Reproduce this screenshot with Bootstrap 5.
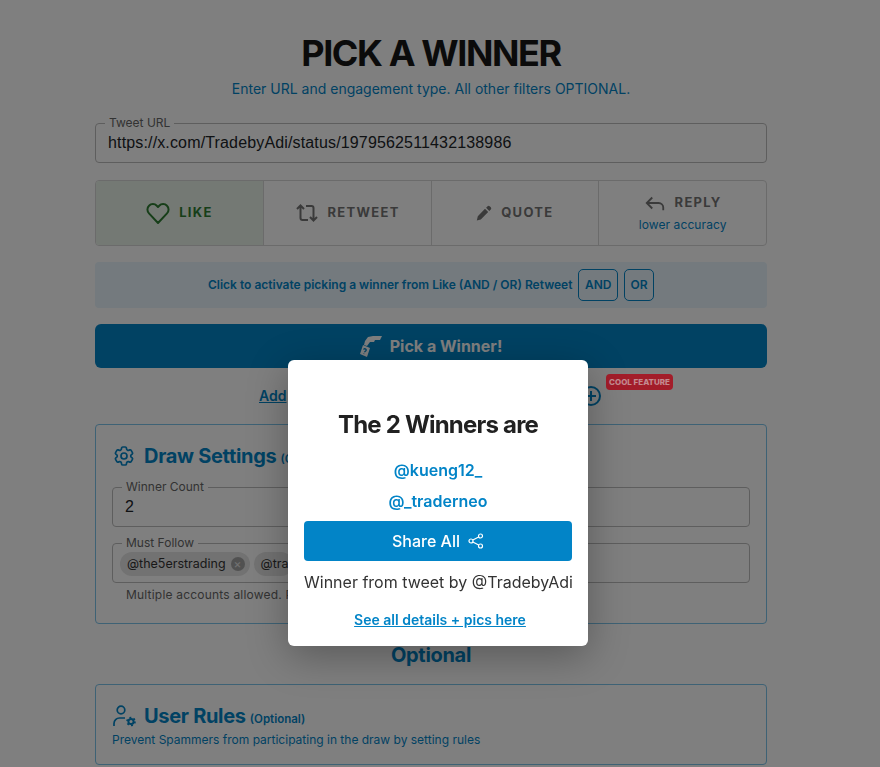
<!DOCTYPE html>
<html lang="en">
<head>
  <meta charset="UTF-8">
  <meta name="viewport" content="width=device-width, initial-scale=1.0">
  <title>Pick a Winner</title>
  <link href="https://cdn.jsdelivr.net/npm/bootstrap@5.3.0/dist/css/bootstrap.min.css" rel="stylesheet">
  <style>
    html, body { height: 100%; overflow: hidden; }
    body { font-family: "Inter", sans-serif; background: #fff; color: #212529; }
    .page-wrap { width: 672px; margin-left: 95px; padding-top: 30px; }
    .page-title { font-size: 36px; line-height: 46px; font-weight: 700; letter-spacing: -1.4px; color: #171717; margin: 0; text-align: center; }
    .page-sub { font-size: 14px; line-height: 20px; color: #0284c7; text-align: center; margin: 3px 0 0; }

    .out-field { border: 1px solid #bdbdbd; border-radius: 4px; padding: 0 12px; height: 46px; margin: 0; min-width: 0; }
    .out-field legend { float: none; width: auto; font-size: 12px; line-height: 12px; color: #666; padding: 0 4px; margin: 0 0 0 -3px; }
    .out-value { font-family: "Liberation Sans", Arial, sans-serif; font-size: 16px; line-height: 22px; letter-spacing: .15px; color: #212529; padding-top: 3px; }
    .url-field { margin-top: 18px; }
    .field-gap { margin-top: 10px; }

    .type-row { border: 1px solid #d6d6d6; border-radius: 4px; height: 66px; margin-top: 17px; overflow: hidden; }
    .type-cell { flex: 1 1 0; border-left: 1px solid #d6d6d6; font-size: 13px; font-weight: 700; letter-spacing: 1.3px; color: #757575; }
    .type-cell:first-child { border-left: 0; background: #e9f3e9; color: #2e7d32; }
    .type-cell small { display: block; font-size: 12px; font-weight: 400; letter-spacing: .1px; color: #0284c7; margin-top: 2px; }
    .type-line { gap: 9px; }

    .and-strip { height: 46px; margin-top: 16px; background: #e8f4fd; border-radius: 4px; font-size: 12px; font-weight: 600; color: #0284c7; gap: 6px; }
    .and-btn { border: 1px solid #0284c7; border-radius: 5px; height: 32px; padding: 0 5.5px; color: #0284c7; font-size: 12px; font-weight: 600; }

    .pick-btn { height: 44px; margin-top: 16px; background: #0284c7; border-radius: 6px; color: #fff; font-size: 16px; font-weight: 700; gap: 8px; }
    .add-row { height: 27px; margin-top: 14px; padding-left: 164px; position: relative; }
    .add-link { font-size: 14px; font-weight: 600; color: #0284c7; text-decoration: underline; width: 322px; }
    .cool-tag { position: absolute; left: 511px; top: -8px; z-index: 1055; background: #a31d2a; color: #c48a90; font-size: 8px; line-height: 16px; font-weight: 800; padding: 0 3px; border-radius: 4px; }

    .rule-panel { border: 1px solid #7cc4ea; border-radius: 4px; padding: 16px; margin-top: 15px; }
    .panel-head { font-size: 20px; line-height: 30px; font-weight: 700; color: #0284c7; letter-spacing: -.3px; gap: 8px; }
    .panel-head small { font-size: 11.5px; line-height: 16px; font-weight: 600; letter-spacing: 0; margin: 5px 0 0 -4px; }
    .chip-row { margin: 3px 0 0 -5px; }
    .chip-item { background: #e4e4e4; border-radius: 12px; height: 24px; font-size: 12.5px; padding: 0 5px 0 7px; gap: 5px; color: #333; white-space: nowrap; }
    .chip-x { width: 14px; height: 14px; border-radius: 50%; background: #a3a3a3; color: #e4e4e4; font-size: 12px; line-height: 13px; text-align: center; }
    .hint-line { font-size: 12px; line-height: 18px; color: #666; margin: 3px 0 3px 14px; letter-spacing: .2px; }
    .optional-head { font-size: 20px; line-height: 28px; font-weight: 700; color: #0284c7; text-align: center; margin: 17px 0 0; letter-spacing: -.3px; }
    .panel-note { font-size: 12px; line-height: 16px; color: #0284c7; margin: 1px 0 0; }

    .winner-box { position: absolute; left: 288px; top: 360px; width: 300px; height: 286px; padding: 47px 16px 0; background: #fff; border: 0; border-radius: 6px; text-align: center; z-index: 1060; box-shadow: 0 10px 40px rgba(0,0,0,.3); }
    .winner-title { font-size: 24px; line-height: 36px; font-weight: 700; color: #212121; letter-spacing: -.8px; margin: 0 0 12px; }
    .winner-name { font-size: 16px; line-height: 31px; font-weight: 600; color: #0284c7; }
    .share-btn { height: 40px; margin-top: 4px; background: #0284c7; color: #fff; border-radius: 4px; font-size: 16px; font-weight: 500; gap: 8px; }
    .winner-from { font-size: 16px; line-height: 24px; color: #333; margin-top: 9px; white-space: nowrap; }
    .winner-link { display: block; font-size: 14px; font-weight: 600; color: #0284c7; margin-top: 15px; padding-left: 4px; }
  </style>
</head>
<body>
  <div class="page-wrap">
    <h1 class="page-title">PICK A WINNER</h1>
    <p class="page-sub">Enter URL and engagement type. All other filters OPTIONAL.</p>

    <fieldset class="out-field url-field">
      <legend>Tweet URL</legend>
      <div class="out-value">https://x.com/TradebyAdi/status/1979562511432138986</div>
    </fieldset>

    <div class="type-row d-flex">
      <div class="type-cell d-flex align-items-center justify-content-center type-line">
        <svg width="24" height="24" viewBox="0 0 24 24" fill="none" stroke="currentColor" stroke-width="2" stroke-linejoin="round"><path d="M12 22 3 12.400a5.400 5.400 0 0 1 0-7.600 5.300 5.300 0 0 1 7.800 0l1.200 1.200 1.200-1.200a5.300 5.300 0 0 1 7.800 0 5.400 5.400 0 0 1 0 7.600z"/></svg>
        LIKE
      </div>
      <div class="type-cell d-flex align-items-center justify-content-center type-line">
        <svg width="24" height="24" viewBox="0 0 24 24" fill="none" stroke="currentColor" stroke-width="2"><path d="M2 8l3.500-3.500L9 8M5.500 5v12a2 2 0 0 0 2 2H13M22 16l-3.500 3.500L15 16M18.500 19V7a2 2 0 0 0-2-2H11"/></svg>
        RETWEET
      </div>
      <div class="type-cell d-flex align-items-center justify-content-center type-line">
        <svg width="16" height="16" viewBox="0 0 16 16" fill="currentColor"><path d="M11.600 1.200a1.500 1.500 0 0 1 2.100 0l1.100 1.100a1.500 1.500 0 0 1 0 2.100l-1.500 1.500-3.200-3.200zM9 3.800 12.200 7l-7.400 7.400-4 1.100 1-4.200z"/></svg>
        QUOTE
      </div>
      <div class="type-cell d-flex flex-column align-items-center justify-content-center">
        <div class="d-flex align-items-center type-line">
          <svg width="22" height="22" viewBox="0 0 24 24" fill="none" stroke="currentColor" stroke-width="2"><path d="M9 6 3 12l6 6M3 12h13a5 5 0 0 1 5 5v3"/></svg>
          REPLY
        </div>
        <small>lower accuracy</small>
      </div>
    </div>

    <div class="and-strip d-flex align-items-center justify-content-center">
      <span>Click to activate picking a winner from Like (AND / OR) Retweet</span>
      <span class="and-btn d-flex align-items-center">AND</span>
      <span class="and-btn d-flex align-items-center">OR</span>
    </div>

    <div class="pick-btn d-flex align-items-center justify-content-center">
      <svg width="22" height="24" viewBox="0 0 22 24"><path fill="#fff" d="M22 2 13 2 8 3 5 7 4 11 7 12 10 8 14 8 15 6 20 6z"/><path fill="#fff" d="M3 11l7 3-3 9-7-3z"/><path fill="none" stroke="#0284c7" stroke-width="1.300" d="M3.500 15.500c.5-1.500 3.200-.6 2.600 1-.3.8-1.300.9-1.600 1.800M3.800 20l.2-.5"/></svg>
      Pick a Winner!
    </div>

    <div class="add-row d-flex align-items-center">
      <span class="add-link">Add</span>
      <svg width="20" height="20" viewBox="0 0 20 20" fill="none" stroke="#0284c7" stroke-width="2"><circle cx="10" cy="10" r="9"/><path d="M10 5v10M5 10h10"/></svg>
      <span class="cool-tag">COOL FEATURE</span>
    </div>

    <div class="rule-panel">
      <div class="panel-head d-flex align-items-center">
        <svg width="24" height="24" viewBox="0 0 24 24" fill="none" stroke="currentColor" stroke-width="1.700" stroke-linejoin="round"><path d="M9.594 3.940c.09-.542.56-.94 1.110-.94h2.593c.55 0 1.020.398 1.110.94l.213 1.281c.063.374.313.686.645.87.074.04.147.083.22.127.324.196.72.257 1.075.124l1.217-.456a1.125 1.125 0 011.370.49l1.296 2.247a1.125 1.125 0 01-.26 1.431l-1.003.827c-.293.24-.438.613-.431.992a6.759 6.759 0 010 .255c-.007.378.138.75.43.99l1.005.828c.424.35.534.954.26 1.430l-1.298 2.247a1.125 1.125 0 01-1.369.491l-1.217-.456c-.355-.133-.75-.072-1.076.124a6.570 6.570 0 01-.22.128c-.331.183-.581.495-.644.869l-.213 1.280c-.09.543-.56.941-1.110.941h-2.594c-.55 0-1.020-.398-1.110-.94l-.213-1.281c-.062-.374-.312-.686-.644-.87a6.520 6.520 0 01-.22-.127c-.325-.196-.72-.257-1.076-.124l-1.217.456a1.125 1.125 0 01-1.369-.49l-1.297-2.247a1.125 1.125 0 01.26-1.431l1.004-.827c.292-.24.437-.613.43-.992a6.932 6.932 0 010-.255c.007-.378-.138-.75-.43-.99l-1.004-.828a1.125 1.125 0 01-.26-1.430l1.297-2.247a1.125 1.125 0 011.370-.491l1.216.456c.356.133.751.072 1.076-.124.072-.044.146-.087.22-.128.332-.183.582-.495.644-.869l.214-1.281z"/><circle cx="12" cy="12" r="3"/></svg>
        <span>Draw Settings</span><small>(Optional)</small>
      </div>
      <fieldset class="out-field field-gap">
        <legend>Winner Count</legend>
        <div class="out-value">2</div>
      </fieldset>
      <fieldset class="out-field field-gap">
        <legend>Must Follow</legend>
        <div class="d-flex gap-1 chip-row">
          <span class="chip-item d-flex align-items-center">@the5erstrading <span class="chip-x">×</span></span>
          <span class="chip-item d-flex align-items-center">@tra</span>
        </div>
      </fieldset>
      <p class="hint-line">Multiple accounts allowed. P</p>
    </div>

    <h2 class="optional-head">Optional</h2>

    <div class="rule-panel">
      <div class="panel-head d-flex align-items-center">
        <svg width="24" height="24" viewBox="0 0 24 24" fill="none" stroke="currentColor" stroke-width="1.700"><circle cx="9" cy="6" r="3.800"/><path d="M2 22v-2.500A5.500 5.500 0 0 1 7.500 14H13"/><circle cx="19" cy="17.500" r="2.600" stroke-width="2"/><circle cx="19" cy="17.500" r="4" stroke-width="1.600" stroke-dasharray="1.900 2.300"/></svg>
        <span>User Rules</span><small>(Optional)</small>
      </div>
      <p class="panel-note">Prevent Spammers from participating in the draw by setting rules</p>
    </div>
  </div>

  <div class="modal-backdrop show"></div>

  <div class="modal-content winner-box">
    <h3 class="winner-title">The 2 Winners are</h3>
    <div class="winner-name">@kueng12_</div>
    <div class="winner-name">@_traderneo</div>
    <div class="share-btn d-flex align-items-center justify-content-center">
      Share All
      <svg width="16" height="16" viewBox="0 0 16 16" fill="none" stroke="currentColor" stroke-width="1.200"><circle cx="12.500" cy="3" r="2"/><circle cx="12.500" cy="13" r="2"/><circle cx="3" cy="8" r="2"/><path d="M4.800 7 10.700 4M4.800 9l5.900 3"/></svg>
    </div>
    <div class="winner-from">Winner from tweet by @TradebyAdi</div>
    <a class="winner-link" href="#">See all details + pics here</a>
  </div>

  <script src="https://cdn.jsdelivr.net/npm/bootstrap@5.3.0/dist/js/bootstrap.bundle.min.js"></script>
</body>
</html>
